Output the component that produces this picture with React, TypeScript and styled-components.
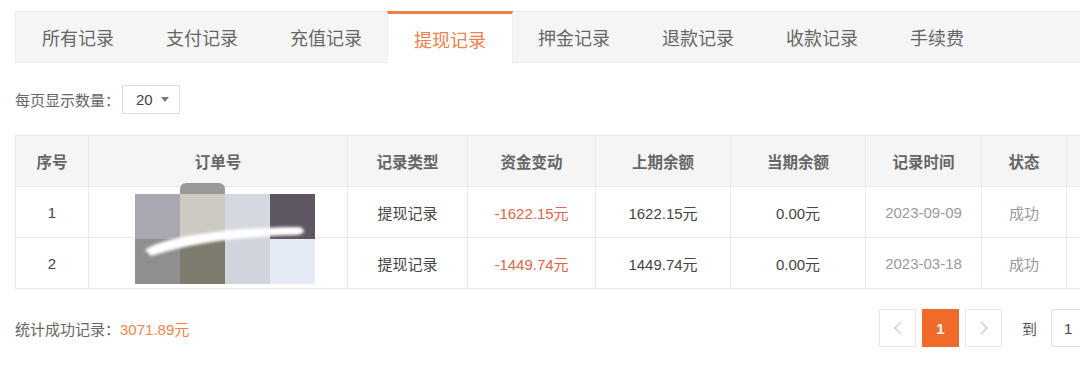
import { FC } from 'react'
import styled, { createGlobalStyle } from 'styled-components'


const GlobalStyle = createGlobalStyle`
  html, body {
    margin: 0;
    padding: 0;
    background: #fff;
    overflow: hidden;
  }
  body {
    font-family: "Liberation Sans", "Noto Sans CJK SC", sans-serif;
    color: #555;
  }
`

const Page = styled.div`
  width: 1131px;
  padding: 11px 0 0 15px;
`

const TabBar = styled.div`
  display: flex;
  height: 50px;
  background: #f5f5f5;
  border: 1px solid #ebebeb;
`

const Tab = styled.div<{ $active?: boolean }>`
  display: flex;
  align-items: center;
  padding: 0 26px;
  height: 50px;
  font-size: 18px;
  color: #666;
  ${p => p.$active && `
    height: 49px;
    margin: -1px -1px 0;
    color: #e9814b;
    background: #fff;
    border-top: 3px solid #e9814b;
    border-left: 1px solid #efefef;
    border-right: 1px solid #efefef;
  `}
`

const Toolbar = styled.div`
  display: flex;
  align-items: center;
  margin-top: 22px;
  font-size: 15px;
  color: #666;
`

const Colon = styled.span`
  font-family: "Noto Sans CJK SC", sans-serif;
  margin-right: 2px;
`

const Select = styled.div`
  display: flex;
  align-items: center;
  gap: 8px;
  width: 58px;
  height: 29px;
  box-sizing: border-box;
  padding-left: 13px;
  border: 1px solid #dedede;
  font-size: 15px;
  color: #444;
`

const Caret = styled.span`
  width: 0;
  height: 0;
  border-left: 4px solid transparent;
  border-right: 4px solid transparent;
  border-top: 5px solid #777;
`

const TableWrap = styled.div`
  position: relative;
  margin-top: 21px;
`

const Table = styled.table`
  width: 1131px;
  table-layout: fixed;
  border-collapse: collapse;
  font-size: 15px;
`

const Th = styled.th`
  height: 50px;
  padding: 0;
  background: #f5f5f5;
  border: 1px solid #e9e9e9;
  font-size: 15.5px;
  font-weight: bold;
  color: #666;
  text-align: center;
`

const Td = styled.td<{ $tone?: 'dark' | 'light' | 'red' }>`
  height: 50px;
  padding: 0;
  border: 1px solid #e9e9e9;
  text-align: center;
  color: ${p => (p.$tone === 'red' ? '#d8674b' : p.$tone === 'light' ? '#9a9a9a' : '#444')};
`

const Mosaic = styled.div`
  position: absolute;
  left: 120px;
  top: 59px;
  display: grid;
  grid-template-columns: repeat(4, 45px);
  grid-template-rows: 45px 45px;
`

const Tile = styled.div<{ $c: string }>`
  background: ${p => p.$c};
`

const Sliver = styled.div`
  position: absolute;
  left: 45px;
  top: -11px;
  width: 45px;
  height: 11px;
  background: #9c9a97;
  border-radius: 6px 6px 0 0;
`

const Smear = styled.svg`
  position: absolute;
  left: -10px;
  top: 20px;
  overflow: visible;
`

const Footer = styled.div`
  display: grid;
  grid-template-columns: 864px auto;
  align-items: center;
  margin-top: 20px;
`

const Total = styled.div`
  font-size: 15px;
  color: #666;
`

const Amount = styled.span`
  color: #f0844b;
`

const Pager = styled.div`
  display: flex;
  align-items: center;
  gap: 6px;
`

const PageBtn = styled.div<{ $active?: boolean }>`
  display: flex;
  align-items: center;
  justify-content: center;
  width: 37px;
  height: 38px;
  box-sizing: border-box;
  border: 1px solid ${p => (p.$active ? '#f06a2b' : '#e6e6e6')};
  background: ${p => (p.$active ? '#f06a2b' : '#fff')};
  color: #fff;
  font-size: 15px;
  font-weight: bold;
`

const GoLabel = styled.span`
  margin-left: 14px;
  font-size: 15px;
  color: #555;
`

const GoInput = styled.div`
  display: flex;
  align-items: center;
  width: 52px;
  height: 38px;
  box-sizing: border-box;
  margin-left: 8px;
  padding-left: 12px;
  border: 1px solid #e2e2e2;
  font-size: 15px;
  color: #444;
`


const tabs = ['所有记录', '支付记录', '充值记录', '提现记录', '押金记录', '退款记录', '收款记录', '手续费']
const widths = [73, 259, 120, 128, 135, 135, 116, 85, 80]
const heads = ['序号', '订单号', '记录类型', '资金变动', '上期余额', '当期余额', '记录时间', '状态', '']

const rows = [
  { id: 1, change: '-1622.15元', before: '1622.15元', after: '0.00元', time: '2023-09-09' },
  { id: 2, change: '-1449.74元', before: '1449.74元', after: '0.00元', time: '2023-03-18' },
]

// pixelated cover over the order numbers
const tiles = ['#a9a8b2', '#cdc9c3', '#d5d9df', '#5e5660', '#8f8f8f', '#7c7b6e', '#d1d4db', '#e4ebf4']


const Chevron: FC<{ dir: 'left' | 'right' }> = ({ dir }) => (
  <svg width="8" height="14" viewBox="0 0 8 14">
    <polyline
      points={dir === 'left' ? '7,1 1,7 7,13' : '1,1 7,7 1,13'}
      fill="none"
      stroke="#c4c4c4"
      strokeWidth="1.2"
    />
  </svg>
)


const App: FC = () => (
  <Page>
    <GlobalStyle />

    <TabBar>
      {tabs.map(t => (
        <Tab key={t} $active={t === '提现记录'}>{t}</Tab>
      ))}
    </TabBar>

    <Toolbar>
      每页显示数量<Colon>：</Colon>
      <Select>20<Caret /></Select>
    </Toolbar>

    <TableWrap>
      <Table>
        <colgroup>
          {widths.map((w, i) => <col key={i} style={{ width: w }} />)}
        </colgroup>
        <thead>
          <tr>{heads.map((h, i) => <Th key={i}>{h}</Th>)}</tr>
        </thead>
        <tbody>
          {rows.map(r => (
            <tr key={r.id}>
              <Td>{r.id}</Td>
              <Td />
              <Td>提现记录</Td>
              <Td $tone="red">{r.change}</Td>
              <Td>{r.before}</Td>
              <Td>{r.after}</Td>
              <Td $tone="light">{r.time}</Td>
              <Td $tone="light">成功</Td>
              <Td />
            </tr>
          ))}
        </tbody>
      </Table>

      <Mosaic>
        {tiles.map((c, i) => <Tile key={i} $c={c} />)}
        <Sliver />
        <Smear width="200" height="60">
          <defs>
            <filter id="blur" x="-20%" y="-50%" width="140%" height="200%">
              <feGaussianBlur stdDeviation="1.5" />
            </filter>
          </defs>
          <path
            d="M20 36 C38 22, 110 13, 174 13 C182 15, 180 20, 172 21 C120 22, 70 28, 26 42 Z"
            fill="#fff"
            filter="url(#blur)"
          />
        </Smear>
      </Mosaic>
    </TableWrap>

    <Footer>
      <Total>统计成功记录：<Amount>3071.89元</Amount></Total>
      <Pager>
        <PageBtn><Chevron dir="left" /></PageBtn>
        <PageBtn $active>1</PageBtn>
        <PageBtn><Chevron dir="right" /></PageBtn>
        <GoLabel>到</GoLabel>
        <GoInput>1</GoInput>
      </Pager>
    </Footer>
  </Page>
)


export default App
